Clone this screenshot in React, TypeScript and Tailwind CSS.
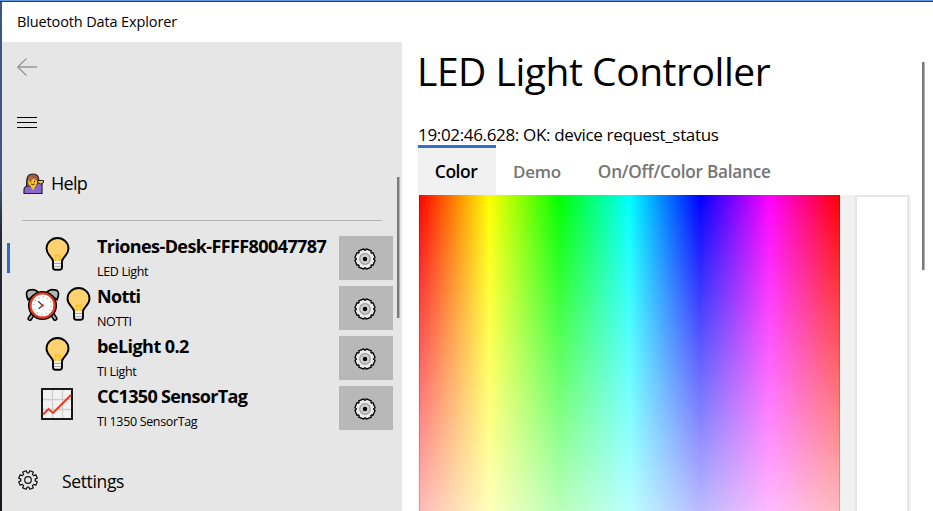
import React from "react";

const Bulb = () => (
  <svg width="25" height="34" viewBox="0 0 25 34" className="block shrink-0">
    <path d="M8 24 C7 19.5 1.5 18 1.5 11.5 A11 10.500 0 0 1 23.500 11.5 C23.500 18 18 19.500 17 24Z" fill="#ffd271" />
    <path d="M8 24H17V31Q17 32.500 15.500 32.500H9.500Q8 32.500 8 31Z" fill="#f2f2f2" />
    <path d="M9.500 18.500h6.500M10.500 19v5M15 19v5" stroke="#fcc421" strokeWidth="1.800" fill="none" />
    <path d="M8 26.500h9M8 29.500h9" stroke="#a5a5a5" strokeWidth="1" />
    <path d="M8 24 C7 19.500 1.500 18 1.500 11.500 A11 10.500 0 0 1 23.500 11.500 C23.500 18 18 19.500 17 24V30.500Q17 32.700 14.500 32.700H10.500Q8 32.700 8 30.500Z" fill="none" stroke="#000" strokeWidth="1.900" />
  </svg>
);

const Clock = () => (
  <svg width="35" height="33" viewBox="0 0 36 34" className="block shrink-0">
    <path d="M8 27L5 31.500M28 27L31 31.500" stroke="#000" strokeWidth="5" strokeLinecap="round" />
    <path d="M8 27L5 31.500M28 27L31 31.500" stroke="#b0b0b0" strokeWidth="2" strokeLinecap="round" />
    <path d="M3 12C0 5 2 1.500 6 2C9 1 13 3 13.500 5ZM33 12C36 5 34 1.500 30 2C27 1 23 3 22.500 5Z" fill="#b1b4b5" stroke="#000" strokeWidth="1.700" />
    <circle cx="18" cy="18" r="15" fill="#000" />
    <circle cx="18" cy="18" r="13.600" fill="#ea3a20" />
    <circle cx="18" cy="18" r="11.200" fill="#fff" />
    <circle cx="18" cy="18" r="9" fill="none" stroke="#b5b5b5" strokeWidth="1.500" strokeDasharray="1.200 3.512" />
    <path d="M13.500 13.500L18 18L14 21.500" stroke="#333" strokeWidth="1.300" fill="none" />
    <circle cx="18" cy="18" r="1.400" fill="#ea3a20" />
  </svg>
);

const Chart = () => (
  <svg width="32" height="32" viewBox="0 0 32 32" className="block shrink-0">
    <rect x="1" y="1" width="30" height="30" fill="#f2f2f2" />
    <path d="M11.500 1V31M21.500 1V31M1 11.500H31M1 21.500H31" stroke="#d0cfce" strokeWidth="1.300" />
    <rect x="1" y="1" width="30" height="30" fill="none" stroke="#000" strokeWidth="1.800" />
    <path d="M2 26.500L7.500 21L12 25L30 7" fill="none" stroke="#ea3a20" strokeWidth="2" />
  </svg>
);

const cogPath = (() => {
  const pts: string[] = [];
  for (let i = 0; i < 8; i++) {
    const a = (i * Math.PI) / 4;
    const corners: [number, number][] = [[-0.27, 7.2], [-0.2, 9.5], [0.2, 9.5], [0.27, 7.2]];
    corners.forEach(([d, r]) =>
      pts.push(`${(11 + r * Math.sin(a + d + 0.3927)).toFixed(2)} ${(11 - r * Math.cos(a + d + 0.3927)).toFixed(2)}`)
    );
  }
  return `M${pts.join("L")}Z`;
})();

const buttonGearPath = (() => {
  const pts: string[] = [];
  for (let i = 0; i < 8; i++) {
    const a = (i * Math.PI) / 4 + Math.PI / 8;
    const corners: [number, number][] = [[-0.34, 8.8], [-0.27, 10.2], [0.27, 10.2], [0.34, 8.8]];
    corners.forEach(([d, r]) =>
      pts.push(`${(11 + r * Math.sin(a + d)).toFixed(2)} ${(11 - r * Math.cos(a + d)).toFixed(2)}`)
    );
  }
  return `M${pts.join("L")}Z`;
})();

const ButtonGear = () => (
  <svg width="22" height="22" viewBox="0 0 22 22" className="-ml-[2px] mt-[2px] block">
    <path d={buttonGearPath} fill="#ececec" stroke="#000" strokeWidth="1.300" strokeLinejoin="round" />
    <circle cx="11" cy="11" r="5.300" fill="#d0cfce" stroke="#9b9b9b" strokeWidth="1.200" />
    <circle cx="11" cy="11" r="2.200" fill="#000" />
  </svg>
);

const Person = () => (
  <svg width="22" height="22" viewBox="0 0 22 22" className="block shrink-0">
    <path d="M3.500 14C3.500 5 4 1 10 1C15.500 1 16 5 16 11L15 14Z" fill="#a45c3f" stroke="#222" strokeWidth="1.200" />
    <path d="M1 20.500V17Q1 13.500 5 13H12L15.500 9L19 10V20.500Z" fill="#8967cf" stroke="#222" strokeWidth="1.200" />
    <path d="M7.500 13L10 17.500L12.500 13Z" fill="#fcc421" />
    <ellipse cx="9.800" cy="8.800" rx="4.600" ry="4.800" fill="#fcc421" />
    <path d="M5.500 7Q9 6.500 10.500 3.500Q12 6 14.500 7" stroke="#a45c3f" strokeWidth="2" fill="none" />
    <path d="M14.500 7.500H20.500V9.500L17.500 11L15 9.500Z" fill="#fcc421" stroke="#222" strokeWidth="1" />
    <path d="M7.300 8.500h1M11 8.500h1" stroke="#222" strokeWidth="1.400" />
    <path d="M8 11Q9.800 12.400 11.500 11" stroke="#222" strokeWidth="0.900" fill="none" />
  </svg>
);

const devices = [
  { name: "Triones-Desk-FFFF80047787", kind: "LED Light", icons: [Bulb], selected: true, track: "tracking-[-0.6px]" },
  { name: "Notti", kind: "NOTTI", icons: [Clock, Bulb], selected: false, track: "tracking-[-0.7px]" },
  { name: "beLight 0.2", kind: "TI Light", icons: [Bulb], selected: false, track: "tracking-[-0.55px]" },
  { name: "CC1350 SensorTag", kind: "TI 1350 SensorTag", icons: [Chart], selected: false, track: "tracking-[-0.67px]" },
];

function Sidebar() {
  return (
    <aside className="flex w-[400px] shrink-0 bg-[#e6e6e6]">
      <div className="flex w-[395px] flex-col">
        <div className="flex h-[50px] items-center pl-[15px]">
          <svg width="21" height="18" viewBox="0 0 21 18" fill="none" stroke="#999" strokeWidth="1.300">
            <path d="M.8 9H20M9.500 .5L.8 9L9.500 17.500" />
          </svg>
        </div>
        <div className="flex h-[60px] items-center pt-[2px] pl-[15px]">
          <svg width="20" height="12" fill="#000">
            <path d="M0 0h20v1H0zM0 5h20v1H0zM0 10h20v1H0z" />
          </svg>
        </div>
        <div className="flex h-[64px] items-center gap-[6px] pl-[21px]">
          <Person />
          <span className="-mt-[2px] text-[18px] leading-6 tracking-[-0.7px]">Help</span>
        </div>
        <div className="mt-[4px] ml-5 h-px w-[360px] bg-[#b3b3b3]" />
        <div className="mt-[12px] flex flex-col">
          {devices.map((d) => (
            <div key={d.name} className="flex h-[50px] items-start">
              <div className="flex h-[50px] w-[20px] items-center pl-[5px]">
                {d.selected && <div className="h-[30px] w-[3px] bg-[#2a6acb]" />}
              </div>
              <div className={`flex h-[42px] w-[70px] items-center justify-center gap-[6px] ${d.icons.length > 1 ? "pl-[2px]" : ""}`}>
                {d.icons.map((Icon, i) => (
                  <Icon key={i} />
                ))}
              </div>
              <div className="w-[247px] pl-[5px] whitespace-nowrap">
                <div className={`mt-px h-[26px] text-[18px] leading-[25px] font-bold ${d.track}`}>{d.name}</div>
                <div className="h-[22px] text-[12.500px] leading-[24px] tracking-[-0.35px]">{d.kind}</div>
              </div>
              <button className="mt-[3px] flex h-[44px] w-[54px] items-center justify-center bg-[#b8b8b8]">
                <ButtonGear />
              </button>
            </div>
          ))}
        </div>
        <div className="mt-[23px] flex h-[48px] items-center pl-[15px]">
          <svg width="22" height="22" viewBox="0 0 22 22" fill="none" stroke="#111" strokeWidth="1.200">
            <path d={cogPath} strokeLinejoin="round" />
            <circle cx="11" cy="11" r="3.300" />
          </svg>
          <span className="mt-[2px] ml-[23px] text-[17.500px] tracking-[-0.35px]">Settings</span>
        </div>
      </div>
      <div className="mt-[135px] h-[141px] w-[2px] bg-[#7a7a7a]" />
      <div className="mt-[135px] h-[141px] w-px bg-[#b5b5b5]" />
    </aside>
  );
}

function ColorPicker() {
  return (
    <div className="flex h-[440px] w-[493px] shrink-0 bg-[#f1f1f1] pl-[1px]">
      <div className="h-[440px] w-[421px] border-x border-black/15 bg-[linear-gradient(to_bottom,#fff0_0%,#fff_100%),linear-gradient(to_right,#f00,#ff0,#0f0,#0ff,#00f,#f0f,#f00)] bg-[length:100%_432px] bg-origin-border" />
      <div className="ml-[15px] h-[440px] w-[54px] border-2 border-[#e6e6e6] bg-white" />
    </div>
  );
}

export default function App() {
  return (
    <div className="flex h-[511px] w-[933px] flex-col overflow-hidden bg-white font-['Open_Sans','Noto_Sans',sans-serif] text-black">
      <div className="h-[2px] shrink-0 border-b border-[#2b3b66] bg-[#6594e0]" />
      <div className="flex min-h-0 flex-1">
        <div className="w-[2px] shrink-0 bg-[linear-gradient(#3c5488_0%,#41587c_35%,#252936_45%,#17171d_100%)]" />
        <div className="flex min-w-0 flex-1 flex-col">
          <header className="flex h-[40px] shrink-0 items-center pl-[15px] text-[14.500px] tracking-[-0.13px]">
            Bluetooth Data Explorer
          </header>
          <div className="flex min-h-0 flex-1">
            <Sidebar />
            <main className="flex w-[520px] shrink-0 flex-col pl-4">
              <h1 className="-ml-px h-[80px] shrink-0 pt-px text-[39px] leading-[56px] tracking-[-0.47px] whitespace-nowrap">LED Light Controller</h1>
              <p className="h-[23px] shrink-0 text-[17px] leading-[26px] tracking-[-0.34px] whitespace-nowrap">
                19:02:46.628: OK: device request_status
              </p>
              <nav className="flex h-[50px] shrink-0 text-[17px] font-semibold tracking-[-0.5px] text-[#757575]">
                <div className="flex w-[78px] items-center justify-center border-t-[3px] border-[#2f6fd2] bg-[#f1f1f1] pr-[2px] text-[17.500px] text-black">Color</div>
                <div className="flex items-center pt-[3px] pl-[17px] tracking-[-0.25px]">Demo</div>
                <div className="flex items-center pt-[3px] pl-[37px] text-[17.200px] tracking-[-0.25px]">On/Off/Color Balance</div>
              </nav>
              <ColorPicker />
            </main>
            <div className="mt-[20px] h-[208px] w-[2px] bg-[#7a7a7a]" />
            <div className="mt-[20px] h-[208px] w-px bg-[#b5b5b5]" />
          </div>
        </div>
      </div>
    </div>
  );
}
